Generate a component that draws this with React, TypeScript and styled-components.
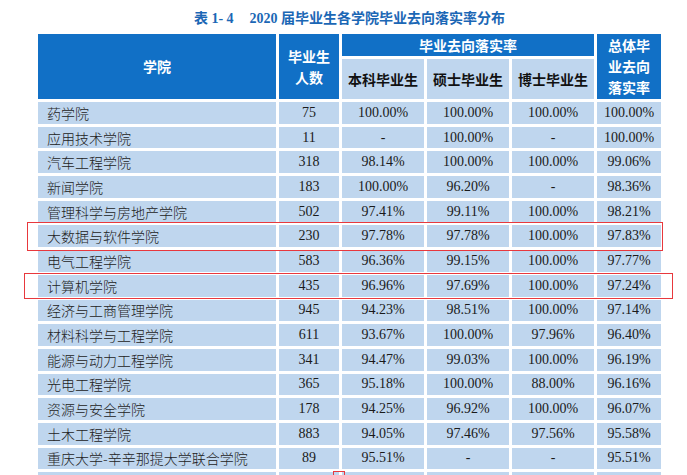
import { styled, createGlobalStyle } from 'styled-components';

const GlobalStyle = createGlobalStyle`
  html, body {
    margin: 0;
    padding: 0;
    background: #ffffff;
    overflow: hidden;
  }
`;

type Row = [string, string, string, string, string, string];

const rows: Row[] = [
  ['药学院', '75', '100.00%', '100.00%', '100.00%', '100.00%'],
  ['应用技术学院', '11', '-', '100.00%', '-', '100.00%'],
  ['汽车工程学院', '318', '98.14%', '100.00%', '100.00%', '99.06%'],
  ['新闻学院', '183', '100.00%', '96.20%', '-', '98.36%'],
  ['管理科学与房地产学院', '502', '97.41%', '99.11%', '100.00%', '98.21%'],
  ['大数据与软件学院', '230', '97.78%', '97.78%', '100.00%', '97.83%'],
  ['电气工程学院', '583', '96.36%', '99.15%', '100.00%', '97.77%'],
  ['计算机学院', '435', '96.96%', '97.69%', '100.00%', '97.24%'],
  ['经济与工商管理学院', '945', '94.23%', '98.51%', '100.00%', '97.14%'],
  ['材料科学与工程学院', '611', '93.67%', '100.00%', '97.96%', '96.40%'],
  ['能源与动力工程学院', '341', '94.47%', '99.03%', '100.00%', '96.19%'],
  ['光电工程学院', '365', '95.18%', '100.00%', '88.00%', '96.16%'],
  ['资源与安全学院', '178', '94.25%', '96.92%', '100.00%', '96.07%'],
  ['土木工程学院', '883', '94.05%', '97.46%', '97.56%', '95.58%'],
  ['重庆大学-辛辛那提大学联合学院', '89', '95.51%', '-', '-', '95.51%'],
];

const Page = styled.div`
  position: relative;
  width: 687px;
  height: 475px;
  padding-left: 38px;
  box-sizing: border-box;
`;

const Title = styled.div`
  width: 623px;
  height: 34px;
  display: flex;
  align-items: center;
  justify-content: center;
  color: #1b67b5;
  font-family: 'Liberation Serif', 'Noto Sans CJK SC', serif;
  font-weight: 700;
  font-size: 14px;
  padding-bottom: 1px;
  box-sizing: border-box;
`;

const Gap = styled.span<{ $w: number }>`
  display: inline-block;
  width: ${(p) => p.$w}px;
`;

const Table = styled.div`
  display: grid;
  grid-template-columns: 238px 60px 82px 82px 82px 64px;
  grid-template-rows: 22px 40px;
  grid-auto-rows: 21.7px;
  column-gap: 3px;
  row-gap: 3px;
`;

const HeadCell = styled.div<{ $row?: string; $col?: string }>`
  grid-row: ${(p) => p.$row || 'auto'};
  grid-column: ${(p) => p.$col || 'auto'};
  background: #1170c6;
  color: #ffffff;
  font-family: 'Noto Sans CJK SC', sans-serif;
  font-weight: 700;
  font-size: 14px;
  line-height: 21px;
  display: flex;
  flex-direction: column;
  align-items: center;
  justify-content: center;
  text-align: center;
`;

const SubHead = styled.div`
  background: #bfd6ee;
  color: #111111;
  font-family: 'Noto Sans CJK SC', sans-serif;
  font-weight: 700;
  font-size: 14px;
  display: flex;
  align-items: center;
  justify-content: center;
`;

const Cell = styled.div<{ $left?: boolean }>`
  background: #bfd6ee;
  color: #1a1a1a;
  font-family: 'Liberation Serif', 'Noto Sans CJK SC', serif;
  font-size: 14px;
  display: flex;
  align-items: center;
  justify-content: ${(p) => (p.$left ? 'flex-start' : 'center')};
  padding-left: ${(p) => (p.$left ? '9px' : '0')};
  white-space: nowrap;
  overflow: hidden;
`;

const NameText = styled.span`
  font-family: 'Noto Sans CJK SC', sans-serif;
  font-weight: 300;
  color: #222222;
`;

const Mark = styled.div<{ $x: number; $y: number; $w: number; $h: number }>`
  position: absolute;
  left: ${(p) => p.$x}px;
  top: ${(p) => p.$y}px;
  width: ${(p) => p.$w}px;
  height: ${(p) => p.$h}px;
  border: 1.5px solid #e8383d;
  box-sizing: border-box;
  pointer-events: none;
`;

export default function App() {
  return (
    <>
      <GlobalStyle />
      <Page>
        <Title>
          表 1- 4<Gap $w={16} />2020 届毕业生各学院毕业去向落实率分布
        </Title>
        <Table>
          <HeadCell $row="1 / 3" $col="1">学院</HeadCell>
          <HeadCell $row="1 / 3" $col="2">
            <span>毕业生</span>
            <span>人数</span>
          </HeadCell>
          <HeadCell $row="1" $col="3 / 6">毕业去向落实率</HeadCell>
          <HeadCell $row="1 / 3" $col="6">
            <span>总体毕</span>
            <span>业去向</span>
            <span>落实率</span>
          </HeadCell>
          <SubHead>本科毕业生</SubHead>
          <SubHead>硕士毕业生</SubHead>
          <SubHead>博士毕业生</SubHead>
          {rows.map((r) => [
            <Cell key={r[0]} $left>
              <NameText>{r[0]}</NameText>
            </Cell>,
            ...r.slice(1).map((v, i) => <Cell key={r[0] + i}>{v}</Cell>),
          ])}
          {/* next row, cut off by the bottom edge */}
          {[0, 1, 2, 3, 4, 5].map((i) => (
            <Cell key={'tail' + i} />
          ))}
        </Table>
        <Mark $x={27} $y={222} $w={636} $h={29} />
        <Mark $x={24} $y={273} $w={649} $h={26} />
        <Mark $x={333} $y={471} $w={12} $h={10} />
      </Page>
    </>
  );
}
